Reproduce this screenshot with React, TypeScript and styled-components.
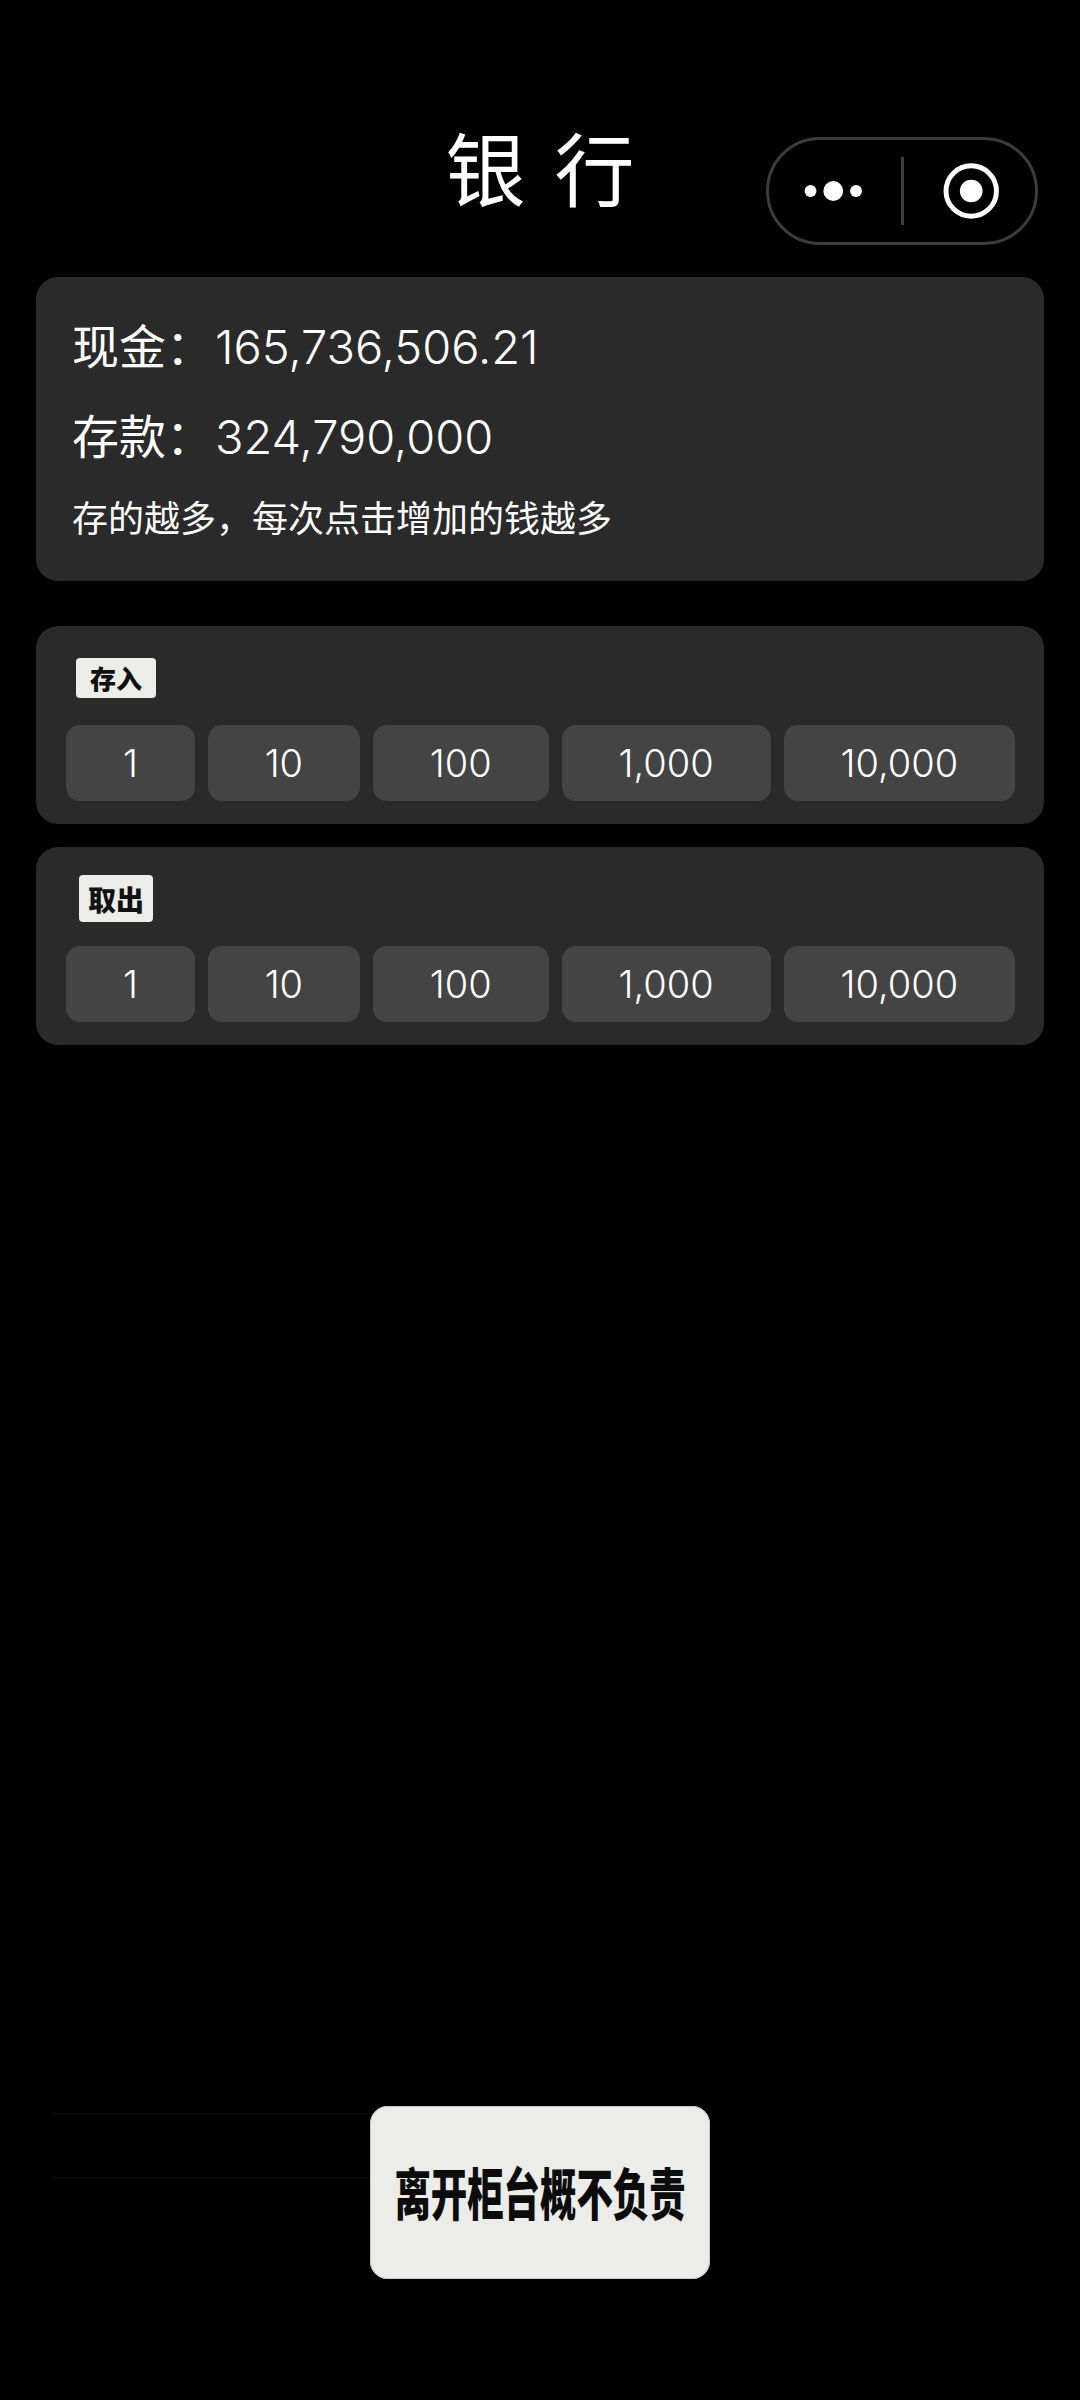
import styled, { createGlobalStyle } from "styled-components";

const GlobalStyle = createGlobalStyle`
  html, body {
    margin: 0;
    padding: 0;
    background: #000;
  }
  body {
    font-family: Inter, "Noto Sans CJK SC", sans-serif;
    color: #fff;
  }
`;

const Page = styled.div`
  width: 1080px;
  height: 2400px;
  display: flex;
  flex-direction: column;
  background: #000;
  overflow: hidden;
`;

const Header = styled.header`
  position: relative;
  height: 277px;
  flex-shrink: 0;
  display: flex;
  justify-content: center;
  padding-top: 113px;
  box-sizing: border-box;
`;

const Title = styled.h1`
  margin: 0;
  height: 104px;
  font-family: "Noto Sans CJK SC", sans-serif;
  font-size: 80px;
  line-height: 104px;
  font-weight: 400;
  letter-spacing: 29px;
  margin-right: -29px;
`;

const Capsule = styled.div`
  position: absolute;
  top: 137px;
  left: 766px;
  width: 272px;
  height: 108px;
  box-sizing: border-box;
  display: flex;
  align-items: center;
  border: 3px solid #3c3c3c;
  border-radius: 54px;
`;

const CapsuleIcon = styled.svg`
  display: block;
  flex: 1;
  height: 60px;
`;

const CapsuleDivider = styled.div`
  width: 3px;
  height: 68px;
  background: #3c3c3c;
  flex-shrink: 0;
`;

const Content = styled.main`
  display: flex;
  flex-direction: column;
  padding: 0 36px;
`;

const Panel = styled.section`
  background: #2a2a2a;
  border-radius: 22px;
  margin-bottom: 23px;
`;

const StatsPanel = styled(Panel)`
  height: 304px;
  box-sizing: border-box;
  padding: 25px 36px 0;
  margin-bottom: 45px;
`;

const StatRow = styled.div`
  height: 90px;
  font-size: 47px;
  line-height: 90px;
  font-weight: 300;
  white-space: nowrap;
`;

const StatLabel = styled.span`
  font-family: "Noto Sans CJK SC", sans-serif;
  font-weight: 400;
  font-size: 47px;
  line-height: 1;
  margin-right: 2px;
`;

const Note = styled.div`
  font-family: "Noto Sans CJK SC", sans-serif;
  font-size: 36px;
  line-height: 68px;
  font-weight: 400;
  white-space: nowrap;
`;

const ActionPanel = styled(Panel)`
  height: 198px;
  box-sizing: border-box;
  padding: 4px 29px 0 30px;
`;

const LabelSlot = styled.div`
  width: 100px;
  height: 95px;
  display: flex;
  align-items: center;
  justify-content: center;
`;

const LabelTile = styled.div<{ $w: number; $h: number; $size: number }>`
  width: ${(p) => p.$w}px;
  height: ${(p) => p.$h}px;
  display: flex;
  align-items: center;
  justify-content: center;
  background: #ecece8;
  border-radius: 4px;
  color: #111;
  font-family: "Noto Sans CJK SC", sans-serif;
  font-weight: 900;
  font-size: ${(p) => p.$size}px;
  line-height: 1;
  white-space: nowrap;
`;

const AmountRow = styled.div`
  display: flex;
  gap: 13px;
`;

const AmountButton = styled.button`
  height: 76px;
  padding: 0 55px;
  flex: 1 1 auto;
  border: none;
  border-radius: 14px;
  background: #444;
  color: #fff;
  font-family: Inter, sans-serif;
  font-size: 38px;
  font-weight: 300;
`;

const Footer = styled.footer`
  position: relative;
  margin-top: auto;
  padding-bottom: 121px;
  display: flex;
  justify-content: center;
`;

const FaintLine = styled.div<{ $top: number }>`
  position: absolute;
  left: 53px;
  top: ${(p) => p.$top}px;
  width: 317px;
  height: 2px;
  background: #0a0a0a;
`;

const LeaveTile = styled.button`
  width: 340px;
  height: 173px;
  border: none;
  border-radius: 18px;
  padding: 0 0 3px;
  background: #ecece9;
  box-shadow: inset 0 0 0 1px #c8c8c4;
  display: flex;
  align-items: center;
  justify-content: center;
  overflow: hidden;
`;

const LeaveText = styled.span`
  display: block;
  color: #0c0c0c;
  font-family: "Noto Sans CJK SC", sans-serif;
  font-weight: 900;
  font-size: 56px;
  line-height: 1;
  white-space: nowrap;
  transform: scaleX(0.65);
`;

const amounts = ["1", "10", "100", "1,000", "10,000"];

function Amounts() {
  return (
    <AmountRow>
      {amounts.map((a) => (
        <AmountButton key={a}>{a}</AmountButton>
      ))}
    </AmountRow>
  );
}

export default function App() {
  return (
    <Page>
      <GlobalStyle />
      <Header>
        <Title>银行</Title>
        <Capsule>
          <CapsuleIcon viewBox="0 0 133 60">
            <circle cx="42" cy="30" r="6" fill="#fff" />
            <circle cx="65" cy="30" r="10" fill="#fff" />
            <circle cx="88" cy="30" r="6" fill="#fff" />
          </CapsuleIcon>
          <CapsuleDivider />
          <CapsuleIcon viewBox="0 0 133 60">
            <circle cx="68" cy="30" r="25.5" fill="none" stroke="#fff" strokeWidth="5" />
            <circle cx="68" cy="30" r="11.5" fill="#fff" />
          </CapsuleIcon>
        </Capsule>
      </Header>
      <Content>
        <StatsPanel>
          <StatRow>
            <StatLabel>现金：</StatLabel>165,736,506.21
          </StatRow>
          <StatRow>
            <StatLabel>存款：</StatLabel>324,790,000
          </StatRow>
          <Note>存的越多，每次点击增加的钱越多</Note>
        </StatsPanel>
        <ActionPanel>
          <LabelSlot>
            <LabelTile $w={80} $h={40} $size={26}>
              存入
            </LabelTile>
          </LabelSlot>
          <Amounts />
        </ActionPanel>
        <ActionPanel>
          <LabelSlot>
            <LabelTile $w={74} $h={47} $size={28}>
              取出
            </LabelTile>
          </LabelSlot>
          <Amounts />
        </ActionPanel>
      </Content>
      <Footer>
        <FaintLine $top={7} />
        <FaintLine $top={71} />
        <LeaveTile>
          <LeaveText>离开柜台概不负责</LeaveText>
        </LeaveTile>
      </Footer>
    </Page>
  );
}
